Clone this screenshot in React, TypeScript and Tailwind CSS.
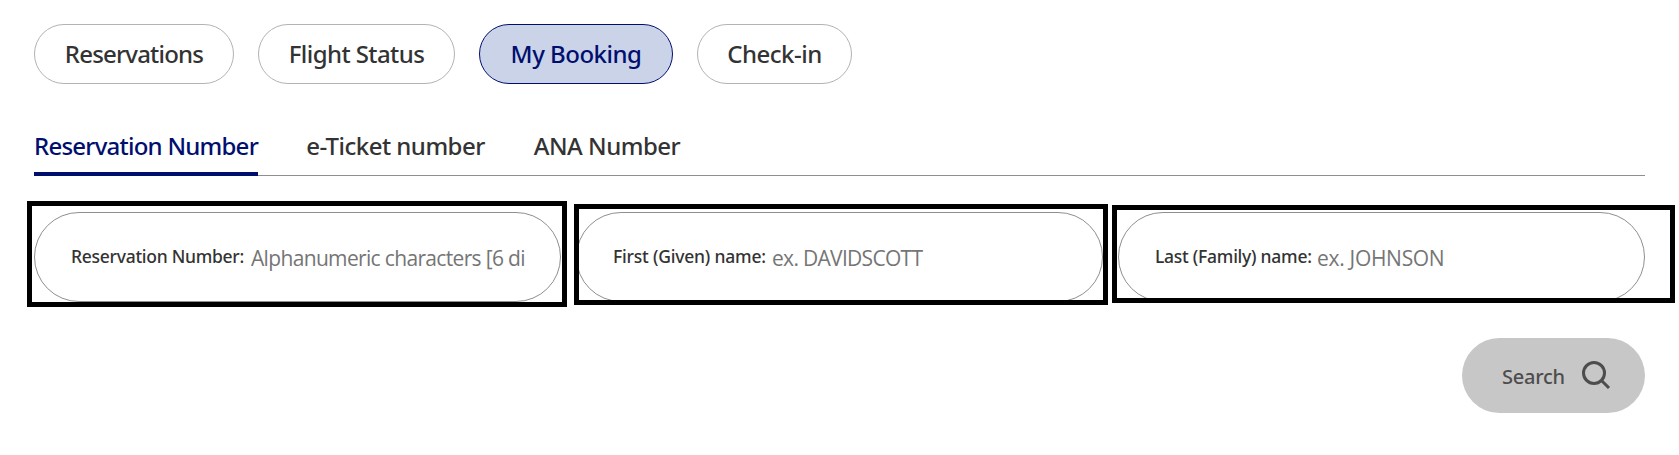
import { useState } from 'react';
import clsx from 'clsx';

const services = [
  { label: 'Reservations', size: 'w-[200px] tracking-[-0.8px]' },
  { label: 'Flight Status', size: 'w-[197px] tracking-[-0.58px]' },
  { label: 'My Booking', size: 'w-[194px] tracking-[-0.5px]' },
  { label: 'Check-in', size: 'w-[155px] tracking-[-0.5px]' },
];

const tabs = [
  { label: 'Reservation Number', size: 'w-[224px] tracking-[-0.76px]' },
  { label: 'e-Ticket number', size: 'w-[179px] tracking-[-0.52px]' },
  { label: 'ANA Number', size: 'w-[148px] tracking-[-0.5px]' },
];

const fields = [
  {
    label: 'Reservation Number:',
    placeholder: 'Alphanumeric characters [6 di',
    labelSize: 'w-[180px] tracking-[-0.27px]',
    inputSize: 'tracking-[-0.66px]',
    frame: '-left-[7px] -right-[6px] -top-[11px] -bottom-[5px]',
  },
  {
    label: 'First (Given) name:',
    placeholder: 'ex. DAVIDSCOTT',
    labelSize: 'w-[159px] tracking-[-0.2px]',
    inputSize: 'tracking-[-0.7px]',
    frame: '-left-[2px] -right-[5px] -top-[8px] -bottom-[3px]',
  },
  {
    label: 'Last (Family) name:',
    placeholder: 'ex. JOHNSON',
    labelSize: 'w-[162px] tracking-[-0.25px]',
    inputSize: 'tracking-[-0.3px]',
    frame: '-left-[6px] -right-[30px] -top-[7px] -bottom-[1px]',
  },
];

export default function App() {
  const [service, setService] = useState('My Booking');
  const [tab, setTab] = useState('Reservation Number');

  return (
    <div className="h-[455px] w-[1679px] overflow-hidden bg-white px-[34px] pt-6 font-['Noto_Sans',sans-serif] text-[#333]">
      <nav className="flex gap-6">
        {services.map(({ label, size }) => (
          <button
            key={label}
            onClick={() => setService(label)}
            className={clsx(
              'flex h-15 items-center justify-center whitespace-nowrap rounded-full border text-2xl font-medium',
              size,
              service === label ? 'border-[#000f6e] bg-[#cbd3e9] text-[#000f6e]' : 'border-[#b3b3b3] bg-white',
            )}
          >
            {label}
          </button>
        ))}
      </nav>

      <div className="mt-[38px] flex h-[54px] gap-12 bg-[linear-gradient(#8f8f8f,#8f8f8f)] bg-[length:100%_1px] bg-bottom bg-no-repeat">
        {tabs.map(({ label, size }) => (
          <button
            key={label}
            onClick={() => setTab(label)}
            className={clsx(
              'flex h-[54px] justify-center whitespace-nowrap border-b-4 pt-2 text-2xl font-medium',
              size,
              tab === label ? 'border-[#000f6e] text-[#000f6e]' : 'border-transparent',
            )}
          >
            {label}
          </button>
        ))}
      </div>

      <form onSubmit={(e) => e.preventDefault()}>
        <div className="mt-9 flex gap-[15px]">
          {fields.map(({ label, placeholder, labelSize, inputSize, frame }) => (
            <label key={label} className="relative flex h-[90px] w-[527px] items-center rounded-[45px] border border-[#8f8f8f] pl-[36px] pr-[30px]">
              <span className={clsx('mb-px shrink-0 whitespace-nowrap text-[17.5px] font-medium', labelSize)}>{label}</span>
              <input
                className={clsx("mt-1 min-w-0 flex-1 font-['Open_Sans',sans-serif] text-[21px] outline-none placeholder:text-[#757575]", inputSize)}
                placeholder={placeholder}
              />
              {/* highlight frame */}
              <span className={clsx('pointer-events-none absolute -m-px border-5 border-black', frame)} />
            </label>
          ))}
        </div>

        <div className="mt-9 flex justify-end">
          <button className="flex h-[75px] w-[183px] items-center rounded-full bg-[#c7c7c7] pl-10 text-[#4d4d4d]">
            <span className="mt-0.5 w-[79px] text-left text-xl font-medium tracking-[-0.25px]">Search</span>
            <svg className="mb-px size-[30px]" viewBox="0 0 30 30" fill="none" stroke="currentColor" strokeWidth="3">
              <circle cx="13" cy="13" r="10.5" />
              <path d="M20.5 20.5 28 28" />
            </svg>
          </button>
        </div>
      </form>
    </div>
  );
}
